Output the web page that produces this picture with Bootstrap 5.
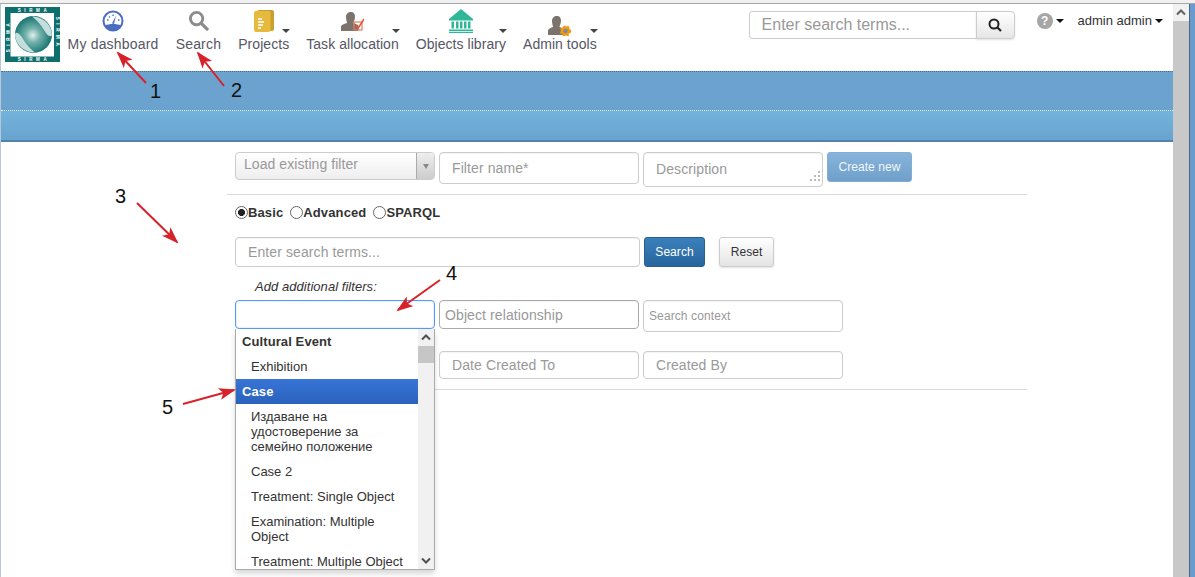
<!DOCTYPE html>
<html lang="en">
<head>
<meta charset="utf-8">
<title>Search</title>
<link rel="stylesheet" href="https://cdn.jsdelivr.net/npm/bootstrap@5.3.0/dist/css/bootstrap.min.css">
<style>
html,body{height:100%;overflow:hidden;background:#fff}
body{font-family:"Liberation Sans",Arial,sans-serif;font-size:14px;color:#333}
.shell{height:577px;position:relative}
.topline{height:4px;background:#f0f0f0;border-bottom:1px solid #a8a8a8}
.page-main{width:1173px;min-width:1173px;border-left:1px solid #b5c7d8}
.fake-scroll{width:16px;background:#c8c8c8;display:flex;flex-direction:column}
.fake-scroll-btn{height:17px;background:#f1f1f1;display:flex;align-items:center;justify-content:center}
.edge{flex:1;background:#6b9acb;border-left:1px solid #46688f}
.app-head{height:67px;padding:0;align-items:flex-start;flex-wrap:nowrap}
.logo-box{margin:3px 0 0 4px;width:55px;height:55px;flex:none}
.nav-set{margin-left:-1px;padding:0}
.nav-entry{position:relative;padding:0 8.6px;display:flex;flex-direction:column;align-items:center;color:#565664;font-size:14px;letter-spacing:.18px;line-height:16px;text-decoration:none;white-space:nowrap}
.nav-entry.nav-tight{padding:0 8.5px;letter-spacing:.05px}
.nav-icon{height:31px;margin-top:1px;display:flex;align-items:flex-end;justify-content:center}
.nav-icon svg{display:block}
.lift-0{margin-bottom:0}
.lift-3{margin-bottom:3px}
.lift-4{margin-bottom:4px}
.lift-5{margin-bottom:5px}
.nav-caret{position:absolute;right:7.5px;top:25px;width:0;height:0;border-left:4px solid transparent;border-right:4px solid transparent;border-top:4px solid #444}
.head-right{margin-left:auto;padding-right:10px;align-items:flex-start}
.top-search{margin-top:7px;width:266px;height:28px;flex-wrap:nowrap}
.top-search .form-control{height:28px;font-size:16px;padding:0 12px;border:1px solid #ccc;border-radius:3px 0 0 3px;box-shadow:none;color:#333}
.top-search .form-control::placeholder{color:#999}
.top-search-btn{width:39px;height:28px;padding:0;border:1px solid #ccc;border-radius:0 4px 4px 0;background:linear-gradient(#fff,#e6e6e6);box-shadow:0 1px 2px rgba(0,0,0,.12);display:flex;align-items:center;justify-content:center}
.help-wrap{margin:9px 0 0 22px;display:flex;align-items:center;gap:3px}
.help-dot{width:16px;height:16px;border-radius:50%;background:#a6a6a6;color:#fff;font-weight:700;font-size:12px;line-height:16px;text-align:center}
.mini-caret{width:0;height:0;border-left:4px solid transparent;border-right:4px solid transparent;border-top:4px solid #111}
.user-wrap{margin:9px 0 0 14px;display:flex;align-items:center;gap:3px;font-size:13px;line-height:16px;color:#333}
.band-a{height:39px;background:#6ca3ce;border-top:1px dotted #3f6f99}
.band-b{height:32px;background:linear-gradient(#72b4db,#69a3cf);border-top:1px dotted #e8f2f8;border-bottom:2px solid #4f83ab}
.work{width:800px;margin-left:226px;position:relative}
.work-in{padding:0 8px}
.row-a{padding-top:10px;height:52px;gap:4px;align-items:flex-start}
.sel-box{width:200px;height:28px;border:1px solid #ccc;border-radius:4px;background:linear-gradient(#fff,#eee);color:#999;font-size:14px;letter-spacing:.06px;line-height:22px;display:flex;overflow:hidden}
.sel-text{flex:1;padding-left:8px}
.sel-arrow{width:18px;border-left:1px solid #aaa;background:linear-gradient(#eee,#ccc);display:flex;align-items:center;justify-content:center}
.sel-arrow i{width:0;height:0;border-left:3.5px solid transparent;border-right:3.5px solid transparent;border-top:5px solid #888}
.fld.form-control{height:32px;width:200px;flex:none;padding:0 12px;font-size:14px;letter-spacing:.1px;border:1px solid #ccc;border-radius:4px;box-shadow:inset 0 1px 1px rgba(0,0,0,.05);color:#333}
.fld.form-control::placeholder{color:#999}
.desc-wrap{position:relative;width:180px;flex:none;height:32px}
.desc-wrap .fld.form-control{width:180px;resize:none;line-height:20px;padding-top:6px}
.desc-grip{position:absolute;right:2px;bottom:2px}
.act-btn{font-size:12px;letter-spacing:.05px;line-height:16px;padding:6px 10.5px;border-radius:3px;white-space:nowrap}
.act-create{height:30px;background:linear-gradient(#88b4dc,#6f9fc9);border:1px solid #84aed4;color:#f2f6fa}
.sep-line{height:1px;background:#d9d9d9;margin:0}
.mode-row{height:42px;padding-top:8.500px;gap:7px;font-size:13px;letter-spacing:.12px;font-weight:700;line-height:17px;align-items:flex-start;color:#333}
.mode-opt{display:flex;align-items:center;margin:0}
.rdo{appearance:none;width:13px;height:13px;border:1px solid #666;border-radius:50%;background:#fff;margin:0;display:block;flex:none}
.rdo:checked{background:radial-gradient(circle,#222 0,#222 3.2px,#fff 3.8px)}
.row-b{gap:4px;height:30px}
.row-b .fld.form-control{width:405px;height:30px}
.act-search{width:61px;height:30px;background:linear-gradient(#3a80bb,#28659e);border:1px solid #24618f;color:#fff;padding:6px 0;text-align:center}
.act-reset{width:55px;height:30px;margin-left:10px;background:linear-gradient(#fff,#e4e4e4);border:1px solid #ccc;color:#333;padding:6px 0;text-align:center;box-shadow:0 1px 2px rgba(0,0,0,.12)}
.add-note{font-style:italic;font-size:13px;letter-spacing:.05px;line-height:14px;padding:13px 0 6px 20px;margin:0;color:#333}
.row-c{gap:4px;height:51px;align-items:flex-start}
.row-c .fld.form-control{height:29px}
.fld.fld-on.form-control{border-color:#5897fb;box-shadow:inset 0 0 2px rgba(88,151,251,.4)}
.fld.fld-rel.form-control{border-color:#aaa;padding:0 5px}
.fld.fld-ctx.form-control{height:32px;font-size:12px;padding:0 5px}
.row-d{gap:4px;height:38px;align-items:flex-start}
.row-d .fld.form-control{height:28px}
.drop-list{position:absolute;left:8px;top:187px;width:200px;height:241px;background:#fff;border:1px solid #aaa;border-top:0;box-shadow:0 4px 5px rgba(0,0,0,.15);display:flex;overflow:hidden;z-index:5}
.drop-items{width:182px;flex:none;list-style:none;margin:0;padding:0;font-size:13px;line-height:15px;color:#333}
.drop-items li{padding:5px 10px 5px 15px}
.drop-items li.grp{padding-left:6px;font-weight:700;font-size:13px;letter-spacing:.1px}
.drop-items li.cur{background:linear-gradient(#3875d7,#2a62bc);color:#fff}
.drop-bar{width:16px;background:#f1f1f1;display:flex;flex-direction:column;margin-left:0}
.drop-arrow{height:17px;display:flex;align-items:center;justify-content:center;flex:none}
.drop-thumb{height:17px;background:#c6c6c6;flex:none}
.drop-rest{flex:1}
.marks{position:absolute;left:0;top:0;width:1195px;height:577px;z-index:10;pointer-events:none}
.marks text{font-family:"Liberation Sans",Arial,sans-serif;font-size:20px;fill:#111}
.logo-word{font-size:4.500px;font-weight:700;fill:#fff;letter-spacing:3.600px;text-anchor:middle}
</style>
</head>
<body>
<div class="shell">
  <div class="topline"></div>
  <div class="d-flex" style="height:573px">
    <div class="page-main">
      <nav class="navbar app-head d-flex bg-white">
        <svg class="logo-box" viewBox="0 0 55 55" aria-label="Sirma logo">
          <defs>
            <radialGradient id="ball" cx="48%" cy="52%" r="55%"><stop offset="0" stop-color="#e4f0ee"/><stop offset=".35" stop-color="#74b3ad"/><stop offset="1" stop-color="#0b6a68"/></radialGradient>
          </defs>
          <rect width="55" height="55" fill="#0f6f6c"/>
          <rect x="5.500" y="6" width="43.500" height="43.500" fill="#fff"/>
          <text class="logo-word" x="29" y="5">SIRMA</text>
          <text class="logo-word" x="29" y="54">SIRMA</text>
          <text class="logo-word" transform="translate(4.500 29) rotate(-90)">SIRMA</text>
          <text class="logo-word" transform="translate(50.500 26) rotate(90)">SIRMA</text>
          <circle cx="28.500" cy="27.500" r="18.500" fill="url(#ball)"/>
          <path d="M27 9.500C38 9.500 47 18 47 28C45 31 42 28 39 23C36 18 32 13 27 9.500Z" fill="#c4dedb"/>
          <path d="M30 45.500C19 45.500 10 37 10 27C12 24 15 27 18 32C21 37 25 42 30 45.500Z" fill="#c4dedb"/>
        </svg>
        <div class="nav-set d-flex">
          <a class="nav-entry" href="#">
            <span class="nav-icon"><svg class="lift-4" width="22" height="22" viewBox="0 0 22 22"><circle cx="11" cy="11" r="9.500" fill="#fff" stroke="#4a6fc0" stroke-width="2"/><path d="M3 15.500A9 9 0 0 0 19 15.500C15 13.500 7 13.500 3 15.500Z" fill="#4a6fc0"/><path d="M10 13.500L14 5.500L12 14Z" fill="#4a6fc0"/><path d="M5 10h1.500M7 6.500l1 1M11 4.500v1.500M16 10h1.500" stroke="#4a6fc0" stroke-width="1.300"/></svg></span>
            My dashboard
          </a>
          <a class="nav-entry" href="#">
            <span class="nav-icon"><svg class="lift-5" width="21" height="21" viewBox="0 0 22 22"><circle cx="9" cy="9" r="6.500" fill="none" stroke="#8c8c8c" stroke-width="3"/><path d="M14 14l6 6" stroke="#8c8c8c" stroke-width="3.500" stroke-linecap="round"/></svg></span>
            Search
          </a>
          <a class="nav-entry nav-tight" href="#">
            <span class="nav-icon"><svg class="lift-4" width="20" height="22" viewBox="0 0 20 22"><rect x="3" y="0" width="17" height="21" rx="2" fill="#c9a02f"/><rect x="0" y="1" width="16.500" height="21" rx="2" fill="#e6bb3d"/><path d="M4 9h4M4 12h6M4 15h5M4 18h3" stroke="#fff" stroke-width="1.300"/></svg></span>
            Projects
            <i class="nav-caret"></i>
          </a>
          <a class="nav-entry nav-tight" href="#">
            <span class="nav-icon"><svg class="lift-4" width="24" height="20" viewBox="0 0 24 20"><path d="M11 0c3 0 4 2.300 4 5s-1.500 4.500-1.500 6c2 .7 4 1.500 5 2.500V19H1v-5c1-1.500 4-2.500 6-3C7 10 6 8 6 5s2-5 5-5Z" fill="#7c736c"/><rect x="14" y="10" width="8" height="8" fill="none" stroke="#e0805f" stroke-width="1.200"/><path d="M15.500 13.500l2.500 3L24 7" fill="none" stroke="#e0563c" stroke-width="1.500"/></svg></span>
            Task allocation
            <i class="nav-caret"></i>
          </a>
          <a class="nav-entry nav-tight" href="#">
            <span class="nav-icon"><svg class="lift-3" width="24" height="24" viewBox="0 0 24 24"><path d="M12 0L24 10H0Z" fill="#2fb797"/><path d="M0 10h24v1.500H0zM2.500 12.500H5v7H2.500zM7 12.500h2.500v7H7zM11 12.500h2.500v7H11zM15 12.500h2.500v7H15zM19 12.500h2.500v7H19zM0 20.500h24V22H0zM0 22.700h24V24H0z" fill="#2fb797"/></svg></span>
            Objects library
            <i class="nav-caret"></i>
          </a>
          <a class="nav-entry nav-tight" href="#">
            <span class="nav-icon"><svg class="lift-0" width="23" height="20" viewBox="0 0 23 20"><path d="M9 0c3 0 4 2.300 4 5s-1.500 4.500-1.500 6c2 .7 3 1 4 2V19H0v-5c1-1.500 3-2.500 5-3C5 10 4 8 4 5s2-5 5-5Z" fill="#7c736c"/><circle cx="17.500" cy="15" r="3.500" fill="#7c8aa0" stroke="#ef9a13" stroke-width="2.500"/><circle cx="17.500" cy="15" r="4.800" fill="none" stroke="#ef9a13" stroke-width="1.600" stroke-dasharray="2 2"/></svg></span>
            Admin tools
            <i class="nav-caret"></i>
          </a>
        </div>
        <div class="head-right d-flex">
          <div class="input-group top-search">
            <input class="form-control" type="text" placeholder="Enter search terms...">
            <button class="btn top-search-btn" type="button" aria-label="Search"><svg width="14" height="14" viewBox="0 0 14 14"><circle cx="6" cy="6" r="4.500" fill="none" stroke="#222" stroke-width="2"/><path d="M9.500 9.500L13 13" stroke="#222" stroke-width="2.200"/></svg></button>
          </div>
          <div class="help-wrap"><span class="help-dot">?</span><i class="mini-caret"></i></div>
          <div class="user-wrap">admin admin <i class="mini-caret"></i></div>
        </div>
      </nav>
      <div class="band-a"></div>
      <div class="band-b"></div>
      <div class="work">
        <div class="work-in">
          <div class="row-a d-flex">
            <div class="sel-box"><span class="sel-text">Load existing filter</span><span class="sel-arrow"><i></i></span></div>
            <input class="form-control fld" type="text" placeholder="Filter name*">
            <div class="desc-wrap">
              <textarea class="form-control fld" placeholder="Description"></textarea>
              <svg class="desc-grip" width="12" height="12" viewBox="0 0 12 12" fill="#bbb"><rect x="9" y="1" width="2" height="2"/><rect x="5" y="5" width="2" height="2"/><rect x="9" y="5" width="2" height="2"/><rect x="1" y="9" width="2" height="2"/><rect x="5" y="9" width="2" height="2"/><rect x="9" y="9" width="2" height="2"/></svg>
            </div>
            <button class="btn act-btn act-create" type="button">Create new</button>
          </div>
        </div>
        <div class="sep-line"></div>
        <div class="work-in">
          <div class="mode-row d-flex">
            <label class="mode-opt"><input class="rdo" type="radio" name="mode" checked>Basic</label>
            <label class="mode-opt"><input class="rdo" type="radio" name="mode">Advanced</label>
            <label class="mode-opt"><input class="rdo" type="radio" name="mode">SPARQL</label>
          </div>
          <div class="row-b d-flex">
            <input class="form-control fld" type="text" placeholder="Enter search terms...">
            <button class="btn act-btn act-search" type="button">Search</button>
            <button class="btn act-btn act-reset" type="button">Reset</button>
          </div>
          <p class="add-note">Add additional filters:</p>
          <div class="row-c d-flex">
            <input class="form-control fld fld-on" type="text">
            <input class="form-control fld fld-rel" type="text" placeholder="Object relationship">
            <input class="form-control fld fld-ctx" type="text" placeholder="Search context">
          </div>
          <div class="row-d d-flex">
            <input class="form-control fld" type="text">
            <input class="form-control fld" type="text" placeholder="Date Created To">
            <input class="form-control fld" type="text" placeholder="Created By">
          </div>
        </div>
        <div class="sep-line"></div>
        <div class="drop-list">
          <ul class="drop-items">
            <li class="grp">Cultural Event</li>
            <li>Exhibition</li>
            <li class="grp cur">Case</li>
            <li>Издаване на удостоверение за семейно положение</li>
            <li>Case 2</li>
            <li>Treatment: Single Object</li>
            <li>Examination: Multiple Object</li>
            <li>Treatment: Multiple Object</li>
          </ul>
          <div class="drop-bar">
            <div class="drop-arrow"><svg width="10" height="7" viewBox="0 0 10 7"><path d="M1 5.500L5 1.500L9 5.500" fill="none" stroke="#505050" stroke-width="2"/></svg></div>
            <div class="drop-thumb"></div>
            <div class="drop-rest"></div>
            <div class="drop-arrow"><svg width="10" height="7" viewBox="0 0 10 7"><path d="M1 1.500L5 5.500L9 1.500" fill="none" stroke="#505050" stroke-width="2"/></svg></div>
          </div>
        </div>
      </div>
    </div>
    <div class="fake-scroll">
      <div class="fake-scroll-btn"><svg width="10" height="7" viewBox="0 0 10 7"><path d="M1 5.500L5 1.500L9 5.500" fill="none" stroke="#606060" stroke-width="2"/></svg></div>
    </div>
    <div class="edge"></div>
  </div>
  <svg class="marks" viewBox="0 0 1195 577">
    <defs><marker id="hd" markerUnits="userSpaceOnUse" markerWidth="18" markerHeight="14" refX="15" refY="6" orient="auto"><path d="M0 0L17 6L0 12L4 6Z" fill="#d7222a"/></marker></defs>
    <g stroke="#d7222a" stroke-width="2" fill="none">
      <line x1="146" y1="83" x2="118" y2="53" marker-end="url(#hd)"/>
      <line x1="224" y1="86" x2="198" y2="53" marker-end="url(#hd)"/>
      <line x1="137" y1="203" x2="177" y2="242" marker-end="url(#hd)"/>
      <line x1="440" y1="280" x2="398" y2="310" marker-end="url(#hd)"/>
      <line x1="183" y1="404" x2="234" y2="390" marker-end="url(#hd)"/>
    </g>
    <text x="150" y="98">1</text>
    <text x="231" y="97">2</text>
    <text x="115" y="203">3</text>
    <text x="446" y="280">4</text>
    <text x="162" y="414">5</text>
  </svg>
</div>
<script src="https://cdn.jsdelivr.net/npm/bootstrap@5.3.0/dist/js/bootstrap.bundle.min.js"></script>
</body>
</html>
